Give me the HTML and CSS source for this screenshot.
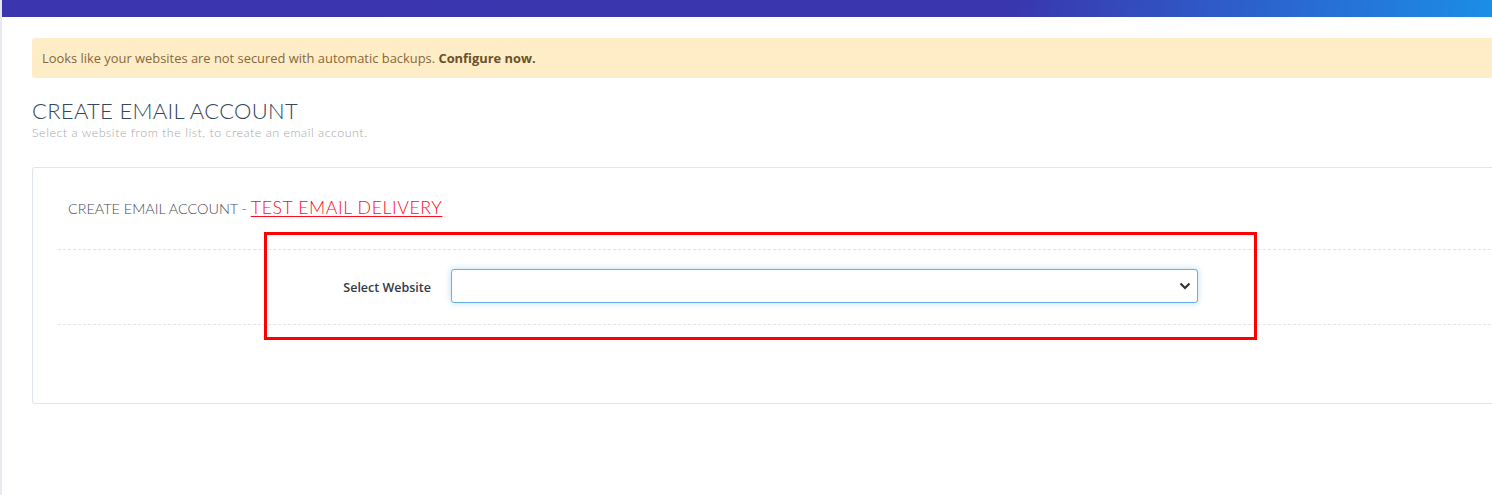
FILE: index.html
```html
<!DOCTYPE html>
<html>
<head>
<meta charset="utf-8">
<link rel="stylesheet" href="styles.css">
</head>
<body>
<div class="topbar"></div>
<div class="main">
  <div class="alert"><span>Looks like your websites are not secured with automatic backups. <b>Configure now.</b></span></div>
  <div class="page-head">
    <h1>CREATE EMAIL ACCOUNT</h1>
    <p>Select a website from the list, to create an email account.</p>
  </div>
  <div class="card">
    <div class="card-title">CREATE EMAIL ACCOUNT - <a href="#">TEST EMAIL DELIVERY</a></div>
    <div class="form-row">
      <label class="label">Select Website</label>
      <div class="select-wrap">
        <select class="select"><option></option></select>
        <svg class="chev" width="12" height="8" viewBox="0 0 12 8"><path d="M1.5 1.5 L6 6 L10.5 1.5" fill="none" stroke="#333" stroke-width="2.2"/></svg>
      </div>
    </div>
    <div class="highlight"></div>
  </div>
</div>
</body>
</html>
```

FILE: styles.css
```css
html, body { margin: 0; padding: 0; background: #fff; }
body {
  width: 1492px; height: 495px; overflow: hidden;
  border-left: 2px solid #e9e8f1; box-sizing: border-box;
  font-family: "Open Sans", "Liberation Sans", sans-serif;
}
.topbar {
  height: 17px;
  background: linear-gradient(100deg, #3b35ae 0%, #3a37ae 68%, #2e5cc9 82%, #1b8ee6 100%);
}
.main { padding: 21px 0 0 30px; position: relative; }
.alert {
  background: #ffedc8;
  border-radius: 3px 0 0 3px;
  height: 40px; box-sizing: border-box;
  padding: 0 10px;
  display: flex; align-items: center;
  font-size: 12.9px; color: #86683a;
  margin-right: -10px;
}
.alert b { color: #6a5127; font-weight: 700; }
.page-head { margin-top: 20px; }
.page-head h1 {
  margin: 0; font-family: Lato, sans-serif; font-weight: 300;
  font-size: 22px; line-height: 26px; color: #34465a; letter-spacing: 0.3px;
}
.page-head p {
  margin: 1px 0 0; font-family: Lato, sans-serif; font-weight: 300;
  font-size: 12.5px; color: #a7a7a7; letter-spacing: 0.5px;
}
.card {
  position: relative;
  margin-top: 27px; margin-right: -10px;
  border: 1px solid #dee5ec; border-radius: 3px;
  height: 237px; box-sizing: border-box;
  padding: 27px 0 0 25px;
}
.card-title {
  padding-left: 10px;
  font-family: Lato, sans-serif; font-weight: 300;
  font-size: 14.4px; color: #4a4a55; height: 24px; line-height: 24px;
}
.card-title a {
  color: #ff0a1e; font-size: 17.8px; text-decoration: underline;
  text-underline-offset: 2px; letter-spacing: 0.55px;
}
.form-row {
  margin-top: 30px;
  border-top: 1px dashed #e4e4e4;
  border-bottom: 1px dashed #e4e4e4;
  height: 76px; box-sizing: border-box;
  display: flex; align-items: center;
}
.label {
  width: 393px; text-align: right; padding-right: 20px; box-sizing: border-box;
  font-size: 12.5px; font-weight: 600; color: #333a44;
}
.select-wrap { position: relative; width: 747px; height: 34px; margin-top: -3px; }
.select {
  width: 100%; height: 100%; box-sizing: border-box;
  appearance: none; -webkit-appearance: none;
  background: #fff; border: 1px solid #66afe9; border-radius: 3px;
  box-shadow: 0 0 6px rgba(102,175,233,0.45);
  outline: none;
}
.chev { position: absolute; right: 7px; top: 13px; }
.highlight {
  position: absolute; left: 231px; top: 64px;
  width: 993px; height: 108px; box-sizing: border-box;
  border: 3px solid #ff0000;
}
```
